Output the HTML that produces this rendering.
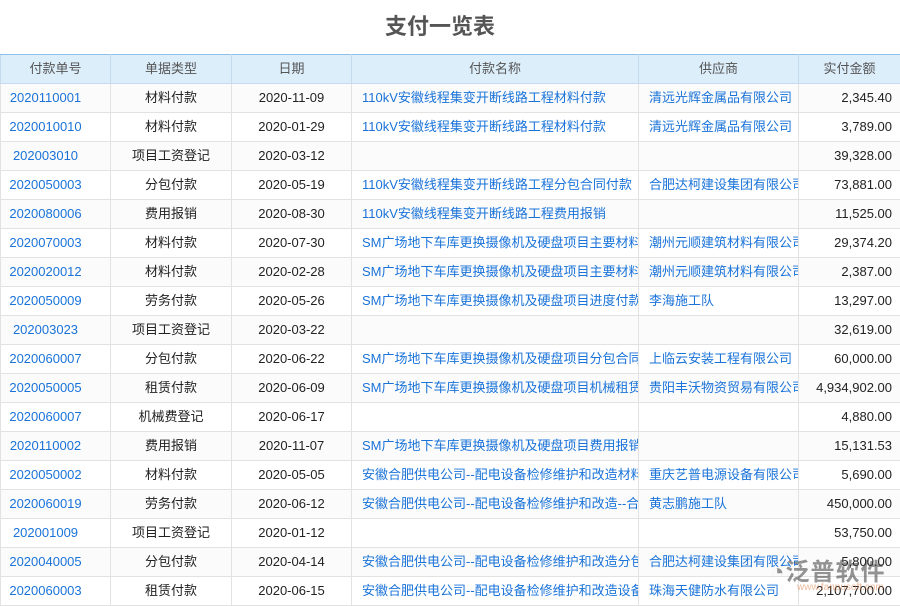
<!DOCTYPE html><html><head><meta charset="utf-8"><style>
body{margin:0;width:900px;height:600px;overflow:hidden;background:#fff;font-family:"Liberation Sans","Noto Sans CJK SC",sans-serif;position:relative}
h1{margin:0;position:absolute;top:12px;left:0;width:880px;text-align:center;font-size:22px;line-height:30px;color:#555;font-weight:bold}
table{position:absolute;top:54px;left:0;border-collapse:collapse;table-layout:fixed;width:900px}
td,th{height:28px;padding:0;border:1px solid #e2e2e2;font-size:13px;line-height:14px;white-space:nowrap;overflow:hidden;font-weight:normal;vertical-align:middle}
th{background:#ddeefb;color:#555;border-color:#c5dcef;border-top:1px solid #8ec0e8}
td{color:#222;text-align:center}
td.b{color:#1a73d9;padding-right:20px}
td.l{text-align:left;padding-left:10px;color:#1a73d9}
td.r{text-align:right;padding-right:8px}
tr:nth-child(even) td{background:#fbfbfb}
.wm{position:absolute;left:770px;top:552px;font-size:24px;color:rgba(60,60,60,.55);font-weight:bold;letter-spacing:1px}
.wm2{position:absolute;left:797px;top:582px;font-size:10px;color:rgba(220,120,60,.5)}
</style></head><body>
<h1>支付一览表</h1>
<table>
<colgroup><col style="width:110px"><col style="width:121px"><col style="width:120px"><col style="width:287px"><col style="width:160px"><col style="width:102px"></colgroup>
<tr><th>付款单号</th><th>单据类型</th><th>日期</th><th>付款名称</th><th>供应商</th><th>实付金额</th></tr>
<tr><td class="b">2020110001</td><td>材料付款</td><td>2020-11-09</td><td class="l">110kV安徽线程集变开断线路工程材料付款</td><td class="l">清远光辉金属品有限公司</td><td class="r">2,345.40</td></tr>
<tr><td class="b">2020010010</td><td>材料付款</td><td>2020-01-29</td><td class="l">110kV安徽线程集变开断线路工程材料付款</td><td class="l">清远光辉金属品有限公司</td><td class="r">3,789.00</td></tr>
<tr><td class="b">202003010</td><td>项目工资登记</td><td>2020-03-12</td><td class="l"></td><td class="l"></td><td class="r">39,328.00</td></tr>
<tr><td class="b">2020050003</td><td>分包付款</td><td>2020-05-19</td><td class="l">110kV安徽线程集变开断线路工程分包合同付款</td><td class="l">合肥达柯建设集团有限公司</td><td class="r">73,881.00</td></tr>
<tr><td class="b">2020080006</td><td>费用报销</td><td>2020-08-30</td><td class="l">110kV安徽线程集变开断线路工程费用报销</td><td class="l"></td><td class="r">11,525.00</td></tr>
<tr><td class="b">2020070003</td><td>材料付款</td><td>2020-07-30</td><td class="l">SM广场地下车库更换摄像机及硬盘项目主要材料</td><td class="l">潮州元顺建筑材料有限公司</td><td class="r">29,374.20</td></tr>
<tr><td class="b">2020020012</td><td>材料付款</td><td>2020-02-28</td><td class="l">SM广场地下车库更换摄像机及硬盘项目主要材料</td><td class="l">潮州元顺建筑材料有限公司</td><td class="r">2,387.00</td></tr>
<tr><td class="b">2020050009</td><td>劳务付款</td><td>2020-05-26</td><td class="l">SM广场地下车库更换摄像机及硬盘项目进度付款</td><td class="l">李海施工队</td><td class="r">13,297.00</td></tr>
<tr><td class="b">202003023</td><td>项目工资登记</td><td>2020-03-22</td><td class="l"></td><td class="l"></td><td class="r">32,619.00</td></tr>
<tr><td class="b">2020060007</td><td>分包付款</td><td>2020-06-22</td><td class="l">SM广场地下车库更换摄像机及硬盘项目分包合同</td><td class="l">上临云安装工程有限公司</td><td class="r">60,000.00</td></tr>
<tr><td class="b">2020050005</td><td>租赁付款</td><td>2020-06-09</td><td class="l">SM广场地下车库更换摄像机及硬盘项目机械租赁</td><td class="l">贵阳丰沃物资贸易有限公司</td><td class="r">4,934,902.00</td></tr>
<tr><td class="b">2020060007</td><td>机械费登记</td><td>2020-06-17</td><td class="l"></td><td class="l"></td><td class="r">4,880.00</td></tr>
<tr><td class="b">2020110002</td><td>费用报销</td><td>2020-11-07</td><td class="l">SM广场地下车库更换摄像机及硬盘项目费用报销</td><td class="l"></td><td class="r">15,131.53</td></tr>
<tr><td class="b">2020050002</td><td>材料付款</td><td>2020-05-05</td><td class="l">安徽合肥供电公司--配电设备检修维护和改造材料</td><td class="l">重庆艺普电源设备有限公司</td><td class="r">5,690.00</td></tr>
<tr><td class="b">2020060019</td><td>劳务付款</td><td>2020-06-12</td><td class="l">安徽合肥供电公司--配电设备检修维护和改造--合</td><td class="l">黄志鹏施工队</td><td class="r">450,000.00</td></tr>
<tr><td class="b">202001009</td><td>项目工资登记</td><td>2020-01-12</td><td class="l"></td><td class="l"></td><td class="r">53,750.00</td></tr>
<tr><td class="b">2020040005</td><td>分包付款</td><td>2020-04-14</td><td class="l">安徽合肥供电公司--配电设备检修维护和改造分包</td><td class="l">合肥达柯建设集团有限公司</td><td class="r">5,800.00</td></tr>
<tr><td class="b">2020060003</td><td>租赁付款</td><td>2020-06-15</td><td class="l">安徽合肥供电公司--配电设备检修维护和改造设备</td><td class="l">珠海天健防水有限公司</td><td class="r">2,107,700.00</td></tr>
</table>
<div class="wm">◔泛普软件</div><div class="wm2">www.fanpusoft.com</div>
</body></html>
